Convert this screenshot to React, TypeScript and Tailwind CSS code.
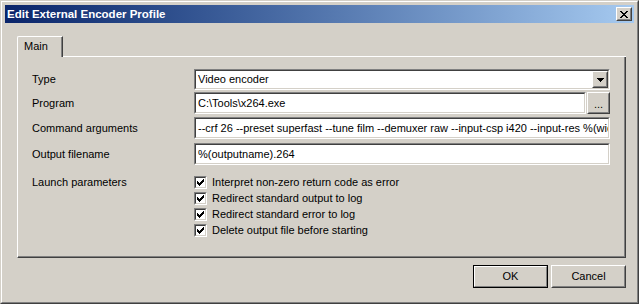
import React from 'react';

const CheckMark = () => (
  <svg width="7" height="7" viewBox="0 0 7 7" shapeRendering="crispEdges">
    <path
      d="M6 0h1v3h-1z M5 1h1v3h-1z M4 2h1v3h-1z M3 3h1v3h-1z M2 4h1v3h-1z M1 3h1v3h-1z M0 2h1v3h-1z"
      fill="#000"
    />
  </svg>
);

const CloseGlyph = () => (
  <svg width="8" height="7" viewBox="0 0 8 7" shapeRendering="crispEdges">
    <path
      d="M0 0h2v1h-2z M6 0h2v1h-2z M1 1h2v1h-2z M5 1h2v1h-2z M2 2h4v1h-4z M3 3h2v1h-2z M2 4h4v1h-4z M1 5h2v1h-2z M5 5h2v1h-2z M0 6h2v1h-2z M6 6h2v1h-2z"
      fill="#000"
    />
  </svg>
);

const ArrowGlyph = () => (
  <svg width="7" height="4" viewBox="0 0 7 4" shapeRendering="crispEdges">
    <path d="M0 0h7v1h-7z M1 1h5v1h-5z M2 2h3v1h-3z M3 3h1v1h-1z" fill="#000" />
  </svg>
);

function Sunken({ children, className }: { children?: React.ReactNode; className: string }) {
  return (
    <div className={'border border-t-[#808080] border-l-[#808080] border-r-white border-b-white ' + className}>
      <div className="h-full border border-t-[#404040] border-l-[#404040] border-r-[#d4d0c8] border-b-[#d4d0c8] bg-white flex items-center overflow-hidden">
        {children}
      </div>
    </div>
  );
}

function Raised({ children, className }: { children?: React.ReactNode; className: string }) {
  return (
    <div className={'border border-t-white border-l-white border-r-[#404040] border-b-[#404040] ' + className}>
      <div className="h-full border border-t-[#d4d0c8] border-l-[#d4d0c8] border-r-[#808080] border-b-[#808080] flex items-center justify-center">
        {children}
      </div>
    </div>
  );
}

function Checkbox({ label }: { label: string }) {
  return (
    <div className="flex items-center h-[16px]">
      <Sunken className="w-[13px] h-[13px]">
        <div className="w-full h-full flex items-center justify-center">
          <CheckMark />
        </div>
      </Sunken>
      <span className="ml-[5px] whitespace-nowrap">{label}</span>
    </div>
  );
}

export default function App() {
  return (
    <div className="w-[639px] h-[304px] bg-[#d4d0c8] font-['Liberation_Sans',Arial,sans-serif] text-[11px] text-black border border-t-[#d4d0c8] border-l-[#d4d0c8] border-r-[#404040] border-b-[#404040]">
      <div className="h-full border border-t-white border-l-white border-r-[#808080] border-b-[#808080] p-[3px] flex flex-col">
        {/* Title bar */}
        <div className="h-[18px] flex items-center bg-linear-to-r from-[#0a246a] to-[#a6caf0] pl-[2px] pr-[2px]">
          <span className="flex-1 text-white font-bold text-[11.5px] leading-[18px] whitespace-nowrap">
            Edit External Encoder Profile
          </span>
          <Raised className="w-[16px] h-[14px] bg-[#d4d0c8]">
            <CloseGlyph />
          </Raised>
        </div>

        {/* Body */}
        <div className="flex-1 flex flex-col pl-[12px] pr-[8px] pt-[13px]">
          {/* Tab strip */}
          <div className="flex h-[21px]">
            <div className="w-[46px] h-[21px] border-l border-t border-white rounded-tl-[2px] border-r border-r-[#404040]">
              <div className="h-full border-r border-r-[#808080] flex items-center pl-[6px] pb-[2px]">
                Main
              </div>
            </div>
            <div className="flex-1 border-b border-white" />
          </div>

          {/* Panel */}
          <div className="h-[201px] border-l border-l-white border-r border-r-[#404040] border-b border-b-[#404040]">
            <div className="h-full border-r border-r-[#808080] border-b border-b-[#808080] pl-[14px] pr-[14px] pt-[12px] flex flex-col">
              {/* Type */}
              <div className="flex items-center h-[21px]">
                <div className="w-[162px]">Type</div>
                <Sunken className="flex-1 h-[21px]">
                  <span className="flex-1 pl-[2px] whitespace-nowrap">Video encoder</span>
                  <Raised className="w-[16px] h-[17px] bg-[#d4d0c8]">
                    <ArrowGlyph />
                  </Raised>
                </Sunken>
              </div>

              {/* Program */}
              <div className="flex items-center h-[22px] mt-[2px]">
                <div className="w-[162px]">Program</div>
                <Sunken className="flex-1 h-[22px]">
                  <span className="pl-[2px] whitespace-nowrap">C:\Tools\x264.exe</span>
                </Sunken>
                <Raised className="w-[23px] h-[22px] ml-[1px]">
                  <span className="leading-none pt-[3px]">...</span>
                </Raised>
              </div>

              {/* Command arguments */}
              <div className="flex items-center h-[22px] mt-[3px]">
                <div className="w-[162px]">Command arguments</div>
                <Sunken className="flex-1 h-[22px] min-w-0">
                  <span className="pl-[2px] whitespace-nowrap">
                    --crf 26 --preset superfast --tune film --demuxer raw --input-csp i420 --input-res %(width)x%(height) --fps %(fps) -o %(outputname).264 -
                  </span>
                </Sunken>
              </div>

              {/* Output filename */}
              <div className="flex items-center h-[22px] mt-[4px]">
                <div className="w-[162px]">Output filename</div>
                <Sunken className="flex-1 h-[22px]">
                  <span className="pl-[2px] whitespace-nowrap">%(outputname).264</span>
                </Sunken>
              </div>

              {/* Launch parameters */}
              <div className="flex mt-[9px]">
                <div className="w-[162px] h-[16px] flex items-center">Launch parameters</div>
                <div className="flex flex-col">
                  <Checkbox label="Interpret non-zero return code as error" />
                  <Checkbox label="Redirect standard output to log" />
                  <Checkbox label="Redirect standard error to log" />
                  <Checkbox label="Delete output file before starting" />
                </div>
              </div>
            </div>
          </div>

          {/* Buttons */}
          <div className="flex justify-end gap-[3px] mt-[7px]">
            <div className="w-[75px] h-[23px] border border-black">
              <div className="h-full border border-t-white border-l-white border-r-[#808080] border-b-[#808080] flex items-center justify-center">
                OK
              </div>
            </div>
            <Raised className="w-[75px] h-[23px]">Cancel</Raised>
          </div>
        </div>
      </div>
    </div>
  );
}
